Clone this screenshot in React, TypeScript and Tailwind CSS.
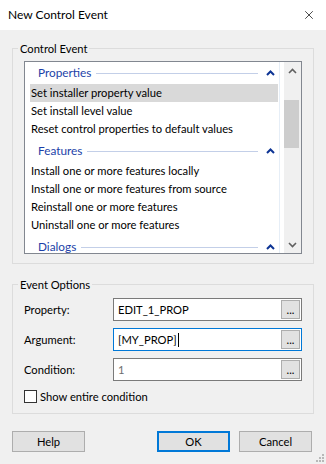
import { X } from 'lucide-react';

type Row = { kind: 'header'; label: string } | { kind: 'item'; label: string; selected?: boolean };

const rows: Row[] = [
  { kind: 'header', label: 'Properties' },
  { kind: 'item', label: 'Set installer property value', selected: true },
  { kind: 'item', label: 'Set install level value' },
  { kind: 'item', label: 'Reset control properties to default values' },
  { kind: 'header', label: 'Features' },
  { kind: 'item', label: 'Install one or more features locally' },
  { kind: 'item', label: 'Install one or more features from source' },
  { kind: 'item', label: 'Reinstall one or more features' },
  { kind: 'item', label: 'Uninstall one or more features' },
  { kind: 'header', label: 'Dialogs' },
];

const font = "font-['Lato','Open_Sans',sans-serif]";

export default function App() {
  return (
    <div className={`relative w-[326px] h-[464px] bg-[#f0f0f0] text-[11.2px] text-black flex flex-col ${font}`}>
      <div className="h-[30px] bg-white flex items-center pl-[8px] pr-[10px] shrink-0 text-[12px]">
        <span className="flex-1 leading-[16px]">New Control Event</span>
        <X className="w-[14px] h-[14px]" strokeWidth={1.2} />
      </div>

      <div className="px-[12px] pt-[18px] flex flex-col">
        <GroupBox title="Control Event" className="h-[216px]">
          <ListBox />
        </GroupBox>

        <GroupBox title="Event Options" className="h-[130px] mt-[20px]">
          <div className="flex flex-col gap-[7px] mt-[5px] ml-[11px]">
            <Field label="Property:" value="EDIT_1_PROP" />
            <Field label="Argument:" value="[MY_PROP]" focused />
            <Field label="Condition:" value="1" muted />
          </div>
          <label className="flex items-center mt-[9px] ml-[11px] h-[13px]">
            <span className="w-[13px] h-[13px] border border-[#333333] bg-white shrink-0" />
            <span className="ml-[3px] leading-[16px]">Show entire condition</span>
          </label>
        </GroupBox>

        <div className="flex items-center mt-[17px]">
          <DialogButton label="Help" />
          <div className="flex-1" />
          <DialogButton label="OK" primary />
          <div className="w-[9px]" />
          <DialogButton label="Cancel" />
          <div className="w-[2px]" />
        </div>
      </div>

      <svg className="absolute right-[2px] bottom-[2px]" width="8" height="8" viewBox="0 0 8 8">
        {[
          [6, 0],
          [3, 3],
          [6, 3],
          [0, 6],
          [3, 6],
          [6, 6],
        ].map(([x, y]) => (
          <rect key={`${x}-${y}`} x={x} y={y} width="2" height="2" fill="#b8b8b8" />
        ))}
      </svg>
    </div>
  );
}

function GroupBox({ title, className, children }: { title: string; className?: string; children: React.ReactNode }) {
  return (
    <div className={`border border-[#dcdcdc] flex flex-col ${className ?? ''}`}>
      <div className="-mt-[8px] ml-[5px] px-[2px] h-[16px] leading-[16px] bg-[#f0f0f0] w-fit">{title}</div>
      {children}
    </div>
  );
}

function ListBox() {
  return (
    <div className="mt-[4px] ml-[11px] w-[278px] h-[193px] border border-[#828790] bg-white flex">
      <div className="w-[254px] overflow-hidden">
        <div className="-mt-[2px]">
          {rows.map((row) =>
            row.kind === 'header' ? (
              <div key={row.label} className="h-[24px] pt-[4px]">
                <div className="h-[18px] flex items-center pl-[13px]">
                  <span className="text-[#1c3fa8] text-[11.8px] leading-[18px]">{row.label}</span>
                  <div className="flex-1 h-px bg-[#c3cfe8] ml-[5px]" />
                  <svg className="ml-[8px] mr-[4px]" width="9" height="6" viewBox="0 0 9 6">
                    <path d="M1 5 L4.5 1.5 L8 5" fill="none" stroke="#0d3494" strokeWidth="2" />
                  </svg>
                </div>
              </div>
            ) : (
              <div
                key={row.label}
                className={`h-[18px] leading-[18px] ml-[5px] mr-[1px] pl-[1px] whitespace-nowrap ${row.selected ? 'bg-[#d9d9d9]' : ''}`}
              >
                {row.label}
              </div>
            )
          )}
        </div>
      </div>
      <div className="w-px bg-[#e6eef7]" />
      <div className="w-[4px]" />
      <div className="w-[17px] bg-[#f0f0f0] flex flex-col">
        <div className="h-[17px] flex items-center justify-center">
          <svg width="9" height="6" viewBox="0 0 9 6">
            <path d="M1 5 L4.5 1.5 L8 5" fill="none" stroke="#606060" strokeWidth="1.6" />
          </svg>
        </div>
        <div className="flex-1 flex flex-col">
          <div className="mt-[21px] h-[48px] w-[15px] bg-[#cdcdcd]" />
        </div>
        <div className="h-[17px] flex items-center justify-center">
          <svg width="9" height="6" viewBox="0 0 9 6">
            <path d="M1 1 L4.5 4.5 L8 1" fill="none" stroke="#606060" strokeWidth="1.6" />
          </svg>
        </div>
      </div>
    </div>
  );
}

function Field({ label, value, focused, muted }: { label: string; value: string; focused?: boolean; muted?: boolean }) {
  return (
    <div className="flex items-center h-[23px]">
      <span className="w-[89px] leading-[16px]">{label}</span>
      <div
        className={`w-[189px] h-[23px] bg-white border flex items-center ${focused ? 'border-[#0078d7]' : 'border-[#7a7a7a]'}`}
      >
        <div className={`flex-1 pl-[4px] flex items-center leading-[16px] ${muted ? 'text-[#6d6d6d]' : ''}`}>
          {value}
          {focused && <span className="ml-[1px] w-px h-[14px] bg-black" />}
        </div>
        <div className="mr-[1px] w-[19px] h-[19px] bg-[#e1e1e1] border border-[#adadad] flex items-center justify-center leading-none">
          ...
        </div>
      </div>
    </div>
  );
}

function DialogButton({ label, primary }: { label: string; primary?: boolean }) {
  return (
    <div
      className={`w-[73px] h-[21px] bg-[#e1e1e1] flex items-center justify-center leading-[16px] ${primary ? 'border-2 border-[#0078d7]' : 'border border-[#adadad]'}`}
    >
      {label}
    </div>
  );
}
